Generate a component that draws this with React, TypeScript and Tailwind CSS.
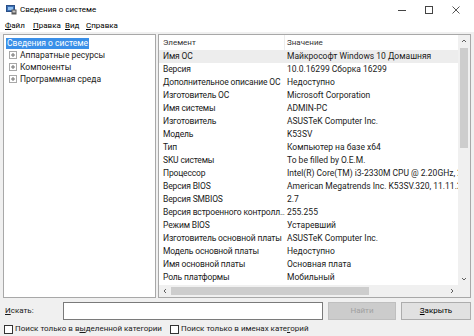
const rows: [string, string][] = [
  ['Имя ОС', 'Майкрософт Windows 10 Домашняя'],
  ['Версия', '10.0.16299 Сборка 16299'],
  ['Дополнительное описание ОС', 'Недоступно'],
  ['Изготовитель ОС', 'Microsoft Corporation'],
  ['Имя системы', 'ADMIN-PC'],
  ['Изготовитель', 'ASUSTeK Computer Inc.'],
  ['Модель', 'K53SV'],
  ['Тип', 'Компьютер на базе x64'],
  ['SKU системы', 'To be filled by O.E.M.'],
  ['Процессор', 'Intel(R) Core(TM) i3-2330M CPU @ 2.20GHz, 2200 МГц'],
  ['Версия BIOS', 'American Megatrends Inc. K53SV.320, 11.11.2011'],
  ['Версия SMBIOS', '2.7'],
  ['Версия встроенного контролл...', '255.255'],
  ['Режим BIOS', 'Устаревший'],
  ['Изготовитель основной платы', 'ASUSTeK Computer Inc.'],
  ['Модель основной платы', 'Недоступно'],
  ['Имя основной платы', 'Основная плата'],
  ['Роль платформы', 'Мобильный'],
];

const PlusBox = () => (
  <svg width="8" height="8" viewBox="0 0 8 8" className="shrink-0">
    <rect x="0.5" y="0.5" width="7" height="7" fill="white" stroke="#a8a8a8" />
    <path d="M2 4h4M4 2v4" stroke="#707070" />
  </svg>
);

const Check = () => (
  <span className="w-[9px] h-[9px] border border-[#333] bg-white shrink-0" />
);

const App = () => {
  return (
    <div
      className="w-[474px] h-[336px] bg-[#f0f0f0] text-[8.5px] leading-none text-[#1a1a1a] flex flex-col overflow-hidden"
      style={{ fontFamily: 'Roboto, "Noto Sans", sans-serif' }}
    >
      {/* title */}
      <div className="h-[20px] bg-white flex items-center pl-[6px]">
        <svg width="11" height="10" viewBox="0 0 11 10">
          <rect x="0.5" y="0.5" width="8" height="6" fill="#3b6fb5" stroke="#2a4f86" />
          <rect x="2" y="2" width="5" height="3" fill="#8fbfef" />
          <rect x="5.5" y="4.5" width="5" height="5" fill="#5a5a5a" />
          <rect x="6.5" y="5.5" width="3" height="2" fill="#c8c8c8" />
        </svg>
        <span className="ml-[3px] text-[8px] text-black">Сведения о системе</span>
        <div className="ml-auto flex items-center h-full pr-[4px]">
          <div className="w-[27px] flex justify-center">
            <span className="w-[8px] h-px bg-[#444]" />
          </div>
          <div className="w-[27px] flex justify-center">
            <span className="w-[8px] h-[8px] border border-[#444]" />
          </div>
          <div className="w-[28px] flex justify-center">
            <svg width="8" height="8" viewBox="0 0 8 8">
              <path d="M0.5 0.5l7 7M7.5 0.5l-7 7" stroke="#444" strokeWidth="0.9" />
            </svg>
          </div>
        </div>
      </div>

      {/* menu */}
      <div className="h-[12px] bg-white flex items-center pl-[5px] text-[8px] text-black">
        <span className="w-[28px]"><u>Ф</u>айл</span>
        <span className="w-[32px]"><u>П</u>равка</span>
        <span className="w-[21px]"><u>В</u>ид</span>
        <span><u>С</u>правка</span>
      </div>

      {/* panels */}
      <div className="flex gap-[2px] px-[3px] pt-[2px] h-[266px]">
        <div className="w-[153px] bg-white border border-[#a8a8a8] pt-[2px] pl-[2px] text-[8.5px]">
          <div className="h-[12px] flex items-center">
            <span className="bg-[#3a8fe8] text-white px-[1px] leading-[11px]">Сведения о системе</span>
          </div>
          {['Аппаратные ресурсы', 'Компоненты', 'Программная среда'].map((t) => (
            <div key={t} className="h-[12px] flex items-center gap-[3px] pl-[3px]">
              <PlusBox />
              <span>{t}</span>
            </div>
          ))}
        </div>

        <div className="flex-1 bg-white border border-[#a8a8a8] flex flex-col min-w-0">
          <div className="flex flex-1 min-h-0">
            <div className="flex-1 min-w-0 overflow-hidden">
              <div className="h-[15px] flex items-center text-[8px] text-[#333]">
                <div className="w-[126px] pl-[4px] border-r border-[#ececec] h-full flex items-center">Элемент</div>
                <div className="pl-[2px]">Значение</div>
              </div>
              {rows.map(([a, b], i) => (
                <div
                  key={a}
                  className={`h-[13px] flex items-center whitespace-nowrap ${i === 0 ? 'bg-[#ededed]' : ''}`}
                >
                  <div className="w-[126px] pl-[4px] shrink-0 overflow-hidden tracking-[-0.15px]">{a}</div>
                  <div className="pl-[2px]">{b}</div>
                </div>
              ))}
            </div>
            {/* vertical scrollbar */}
            <div className="w-[12px] bg-[#f0f0f0] flex flex-col items-center">
              <svg width="12" height="12" viewBox="0 0 12 12">
                <path d="M4 7l2-2 2 2" fill="none" stroke="#606060" />
              </svg>
              <div className="w-[8px] h-[100px] bg-[#cdcdcd] mt-[1px]" />
              <svg width="12" height="12" viewBox="0 0 12 12" className="mt-auto">
                <path d="M4 5l2 2 2-2" fill="none" stroke="#606060" />
              </svg>
            </div>
          </div>
          {/* horizontal scrollbar */}
          <div className="h-[12px] bg-[#f0f0f0] flex items-center pr-[12px]">
            <svg width="12" height="12" viewBox="0 0 12 12">
              <path d="M7 4l-2 2 2 2" fill="none" stroke="#606060" />
            </svg>
            <div className="w-[198px] h-[8px] bg-[#cdcdcd]" />
            <svg width="12" height="12" viewBox="0 0 12 12" className="ml-auto">
              <path d="M5 4l2 2-2 2" fill="none" stroke="#606060" />
            </svg>
          </div>
        </div>
      </div>

      {/* search */}
      <div className="flex items-center mt-[4px] px-[3px] h-[18px] text-[8px]">
        <span className="w-[60px] pl-[2px]"><u>И</u>скать:</span>
        <div className="w-[260px] h-[18px] bg-white border border-[#7a7a7a]" />
        <button className="ml-[5px] w-[68px] h-[18px] bg-[#cccccc] border border-[#bfbfbf] text-[#a0a0a0]">
          Найти
        </button>
        <button className="ml-[5px] w-[70px] h-[18px] bg-[#e1e1e1] border border-[#adadad] text-black">
          <u>З</u>акрыть
        </button>
      </div>

      {/* checkboxes */}
      <div className="flex items-center mt-[3px] pl-[4px] h-[12px] text-[8px] whitespace-nowrap">
        <div className="flex items-center gap-[2px] w-[166px]">
          <Check />
          <span>Поиск только в в<u>ы</u>деленной категории</span>
        </div>
        <div className="flex items-center gap-[2px]">
          <Check />
          <span>Поиск только в именах кате<u>г</u>орий</span>
        </div>
      </div>
    </div>
  );
};

export default App;
